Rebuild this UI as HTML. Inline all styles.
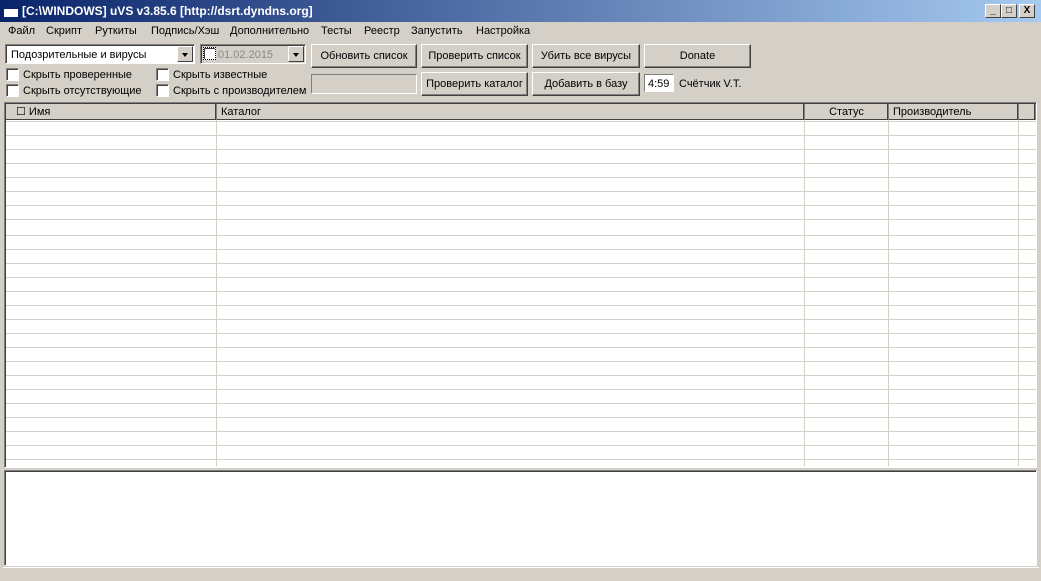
<!DOCTYPE html><html><head><style>
*{box-sizing:border-box;margin:0;padding:0}
body{width:1041px;height:581px;background:#d4d0c8;font-family:"Liberation Sans",sans-serif;font-size:11px;position:relative;overflow:hidden;color:#000}
.a{position:absolute}
.title{left:0;top:0;width:1041px;height:22px;background:linear-gradient(90deg,#0a246a,#a6caf0);color:#fff;font-weight:bold;font-size:12px;line-height:22px;padding-left:22px}
.btn{position:absolute;background:#d4d0c8;border:1px solid;border-color:#fff #404040 #404040 #fff;box-shadow:inset -1px -1px #808080;text-align:center;line-height:23px;font-size:11px}
.sunk{position:absolute;border:1px solid;border-color:#808080 #fff #fff #808080;box-shadow:inset 1px 1px #404040;background:#fff}
.cb{position:absolute;width:13px;height:13px;background:#fff;border:1px solid;border-color:#808080 #fff #fff #808080;box-shadow:inset 1px 1px #404040}
.lbl{position:absolute;font-size:11px}
.m{position:absolute;top:25px;font-size:11px}
.dd{position:absolute;width:16px;height:16px;background:#d4d0c8;border:1px solid;border-color:#fff #404040 #404040 #fff}
.dd:after{content:"";position:absolute;left:4px;top:6px;border:3px solid transparent;border-top:4px solid #000}
.hd{position:absolute;top:104px;height:16px;background:#d4d0c8;border-right:1px solid #808080;box-shadow:inset -1px -1px #404040;line-height:17px;font-size:11px}
.wb{position:absolute;top:4px;width:16px;height:14px;background:#d4d0c8;border:1px solid;border-color:#fff #404040 #404040 #fff;font-size:10px;line-height:12px;text-align:center;font-weight:bold}
</style></head><body>
<div class="a title">[C:\WINDOWS] uVS v3.85.6 [http://dsrt.dyndns.org]</div>
<div class="a" style="left:4px;top:6px;width:14px;height:11px;background:#fff;border-top:3px solid #0a246a"></div>
<div class="wb" style="left:985px">_</div><div class="wb" style="left:1001px">□</div><div class="wb" style="left:1019px">X</div>
<div class="m" style="left:8px">Файл</div><div class="m" style="left:46px">Скрипт</div><div class="m" style="left:95px">Руткиты</div><div class="m" style="left:151px">Подпись/Хэш</div><div class="m" style="left:230px">Дополнительно</div><div class="m" style="left:321px">Тесты</div><div class="m" style="left:364px">Реестр</div><div class="m" style="left:411px">Запустить</div><div class="m" style="left:476px">Настройка</div>
<div class="sunk" style="left:5px;top:44px;width:190px;height:20px;padding:4px 5px">Подозрительные и вирусы</div>
<div class="dd" style="left:177px;top:46px"></div>
<div class="sunk" style="left:200px;top:44px;width:106px;height:20px;background:#d4d0c8;color:#888;padding:4px 0 0 17px">01.02.2015</div>
<div class="cb" style="left:203px;top:47px;border:1px dotted #000"></div>
<div class="dd" style="left:288px;top:46px"></div>
<div class="btn" style="left:311px;top:44px;width:106px;height:24px">Обновить список</div>
<div class="btn" style="left:421px;top:44px;width:107px;height:24px">Проверить список</div>
<div class="btn" style="left:532px;top:44px;width:108px;height:24px">Убить все вирусы</div>
<div class="btn" style="left:644px;top:44px;width:107px;height:24px">Donate</div>
<div class="cb" style="left:6px;top:68px"></div><div class="lbl" style="left:23px;top:69px">Скрыть проверенные</div>
<div class="cb" style="left:156px;top:68px"></div><div class="lbl" style="left:173px;top:69px">Скрыть известные</div>
<div class="cb" style="left:6px;top:84px"></div><div class="lbl" style="left:23px;top:85px">Скрыть отсутствующие</div>
<div class="cb" style="left:156px;top:84px"></div><div class="lbl" style="left:173px;top:85px">Скрыть с производителем</div>
<div class="sunk" style="left:311px;top:74px;width:106px;height:20px;background:#d4d0c8;box-shadow:none"></div>
<div class="btn" style="left:421px;top:72px;width:107px;height:24px">Проверить каталог</div>
<div class="btn" style="left:532px;top:72px;width:108px;height:24px">Добавить в базу</div>
<div class="sunk" style="left:644px;top:74px;width:30px;height:18px;padding:3px 3px;box-shadow:none">4:59</div>
<div class="lbl" style="left:679px;top:78px">Счётчик V.T.</div>
<div class="a" style="left:4px;top:102px;width:1033px;height:366px;border:1px solid;border-color:#808080 #fff #fff #808080;box-shadow:inset 1px 1px #404040;background:#fff repeating-linear-gradient(180deg,transparent 0 13px,#d4d0c8 13px 14px);background-position:0 120px;background-origin:border-box"></div>
<div class="a" style="left:6px;top:104px;width:1030px;height:17px;background:#fff"></div>
<div class="a" style="left:216px;top:120px;width:1px;height:346px;background:#d4d0c8"></div>
<div class="a" style="left:804px;top:120px;width:1px;height:346px;background:#d4d0c8"></div>
<div class="a" style="left:888px;top:120px;width:1px;height:346px;background:#d4d0c8"></div>
<div class="a" style="left:1018px;top:120px;width:1px;height:346px;background:#d4d0c8"></div>
<div class="hd" style="left:6px;width:211px;padding-left:10px">☐ Имя</div>
<div class="hd" style="left:217px;width:588px;padding-left:4px">Каталог</div>
<div class="hd" style="left:805px;width:84px;text-align:center">Статус</div>
<div class="hd" style="left:889px;width:130px;padding-left:4px">Производитель</div>
<div class="hd" style="left:1019px;width:17px"></div>
<div class="a" style="left:4px;top:470px;width:1033px;height:96px;border:1px solid;border-color:#808080 #fff #fff #808080;box-shadow:inset 1px 1px #404040;background:#fff"></div>
<div class="a" style="left:3px;top:567px;width:1036px;height:13px;border-top:1px solid #fff;background:#d4d0c8"></div>
</body></html>
